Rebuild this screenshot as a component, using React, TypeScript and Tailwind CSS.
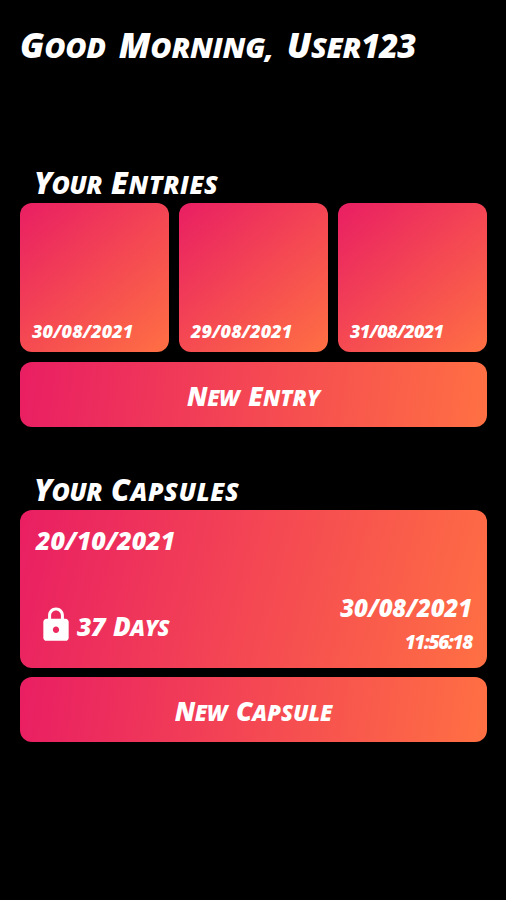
import React from "react";

interface Entry {
  id: number;
  date: string;
  spacing: string;
}

const entries: Entry[] = [
  { id: 1, date: "30/08/2021", spacing: "tracking-[0.1px]" },
  { id: 2, date: "29/08/2021", spacing: "tracking-[0.1px]" },
  { id: 3, date: "31/08/2021", spacing: "tracking-[-0.7px]" },
];

const LockIcon = () => (
  <svg className="w-[38px] h-[38px] ml-px -mt-1" viewBox="0 0 24 24" fill="currentColor">
    <path d="M18 8h-1V6c0-2.760-2.240-5-5-5S7 3.240 7 6v2H6c-1.100 0-2 .9-2 2v10c0 1.100.9 2 2 2h12c1.100 0 2-.9 2-2V10c0-1.100-.9-2-2-2zm-6 9c-1.100 0-2-.9-2-2s.9-2 2-2 2 .9 2 2-.9 2-2 2zM8.900 8V6c0-1.710 1.390-3.100 3.100-3.100s3.100 1.390 3.100 3.100v2H8.900z" />
  </svg>
);

const SectionTitle = ({ words }: { words: string[] }) => (
  <h2 className="flex gap-[9px] pl-[14px] h-[39px] -mt-0.5 items-baseline leading-[37px] text-[25px] font-extrabold uppercase">
    {words.map((word) => (
      <span
        key={word}
        className="block first:tracking-[-0.6px] last:tracking-[0.6px] first-letter:text-[30px]"
      >
        {word}
      </span>
    ))}
  </h2>
);

const ActionButton = ({ words }: { words: string[] }) => (
  <button className="flex w-full h-[65px] items-center justify-center gap-[9px] rounded-xl bg-[linear-gradient(98deg,#e91e63,#ff7043)] pt-[3px] text-[22px] leading-[40px] font-extrabold italic uppercase">
    {words.map((word) => (
      <span
        key={word}
        className="block first:tracking-[-0.4px] first-letter:text-[26px]"
      >
        {word}
      </span>
    ))}
  </button>
);

export default function App() {
  return (
    <main className="h-[900px] w-[506px] overflow-hidden bg-black pl-5 pr-[19px] font-['Open_Sans',sans-serif] font-extrabold italic text-white">
      {/* Greeting */}
      <h1 className="flex h-[166px] items-baseline gap-[13px] pt-[21px] text-[29px] leading-[48px] tracking-[-0.3px] uppercase">
        <span className="block first-letter:text-[35px]">Good</span>
        <span className="block first-letter:text-[35px]">Morning,</span>
        <span className="flex items-baseline">
          <span className="block first-letter:text-[35px]">User</span>
          <span className="text-[33px] tracking-[-1px]">123</span>
        </span>
      </h1>

      {/* Entries */}
      <section>
        <SectionTitle words={["Your", "Entries"]} />
        <div className="grid grid-cols-3 gap-2.5">
          {entries.map((entry) => (
            <div
              key={entry.id}
              className={`flex h-[149px] items-end rounded-xl bg-[linear-gradient(140deg,#e91e63,#ff7043)] pl-3 pb-[11px] text-[18px] leading-5 ${entry.spacing}`}
            >
              {entry.date}
            </div>
          ))}
        </div>
        <div className="pt-2.5">
          <ActionButton words={["New", "Entry"]} />
        </div>
      </section>

      {/* Capsules */}
      <section className="pt-[46px]">
        <SectionTitle words={["Your", "Capsules"]} />
        <div className="flex h-[158px] flex-col justify-between rounded-xl bg-[linear-gradient(105deg,#e91e63,#ff7043)] pl-4 pr-[15px] pt-[15px] pb-[9px]">
          <p className="text-[25px] leading-[30px]">20/10/2021</p>
          <div className="flex items-end justify-between">
            <div className="flex items-center pb-[12px]">
              <LockIcon />
              <p className="flex items-baseline gap-2 pl-0.5 text-[22px] leading-[40px] tracking-[-0.5px] uppercase">
                <span className="text-[25px]">37</span>
                <span className="block first-letter:text-[26px]">Days</span>
              </p>
            </div>
            <div className="text-right">
              <p className="text-[24px] leading-[34px] tracking-[-0.2px]">30/08/2021</p>
              <p className="pt-px text-[19px] leading-[33px] tracking-[-1.3px]">11:56:18</p>
            </div>
          </div>
        </div>
        <div className="pt-[9px]">
          <ActionButton words={["New", "Capsule"]} />
        </div>
      </section>
    </main>
  );
}
